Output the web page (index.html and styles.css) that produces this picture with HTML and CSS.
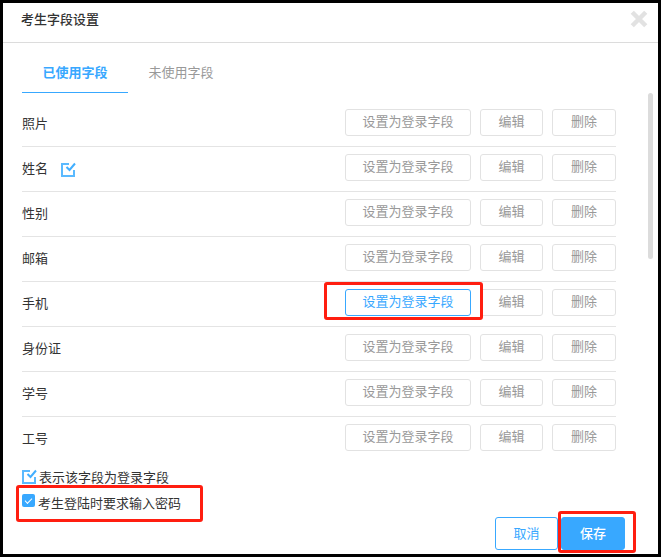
FILE: index.html
```html
<!DOCTYPE html>
<html lang="zh-CN">
<head>
<meta charset="utf-8">
<meta name="viewport" content="width=device-width, initial-scale=1">
<title>考生字段设置</title>
<link rel="stylesheet" href="styles.css">
</head>
<body>
<svg class="sprite" aria-hidden="true">
  <symbol id="login-mark" viewBox="0 0 15 15">
    <path d="M8 2H1v12h12V8" fill="none" stroke="#5bbaff" stroke-width="2"/>
    <path d="M5.500 5l3 3L14 1.500" fill="none" stroke="#42afff" stroke-width="2"/>
  </symbol>
</svg>
<main class="dialog">
  <header class="dialog-header">
    <h1 class="title">考生字段设置</h1>
    <button class="close" type="button" aria-label="关闭">
      <svg class="close-icon" viewBox="0 0 16 16"><path d="M2 2l12 12M14 2L2 14" stroke="#e2e2e2" stroke-width="4"/></svg>
    </button>
  </header>
  <div class="dialog-body">
    <nav class="tabs">
      <button class="tab tab-active" type="button">已使用字段</button>
      <button class="tab" type="button">未使用字段</button>
    </nav>
    <div class="scroll-area">
      <ul class="fields">
        <li class="field">
          <span class="name">照片</span>
          <span class="slot"><button class="btn btn-login" type="button">设置为登录字段</button></span>
          <button class="btn btn-edit" type="button">编辑</button>
          <button class="btn" type="button">删除</button>
        </li>
        <li class="field">
          <span class="name">姓名<svg class="mark"><use href="#login-mark"/></svg></span>
          <span class="slot"><button class="btn btn-login" type="button">设置为登录字段</button></span>
          <button class="btn btn-edit" type="button">编辑</button>
          <button class="btn" type="button">删除</button>
        </li>
        <li class="field">
          <span class="name">性别</span>
          <span class="slot"><button class="btn btn-login" type="button">设置为登录字段</button></span>
          <button class="btn btn-edit" type="button">编辑</button>
          <button class="btn" type="button">删除</button>
        </li>
        <li class="field">
          <span class="name">邮箱</span>
          <span class="slot"><button class="btn btn-login" type="button">设置为登录字段</button></span>
          <button class="btn btn-edit" type="button">编辑</button>
          <button class="btn" type="button">删除</button>
        </li>
        <li class="field">
          <span class="name">手机</span>
          <span class="slot callout callout-login"><button class="btn btn-login btn-hover" type="button">设置为登录字段</button></span>
          <button class="btn btn-edit" type="button">编辑</button>
          <button class="btn" type="button">删除</button>
        </li>
        <li class="field">
          <span class="name">身份证</span>
          <span class="slot"><button class="btn btn-login" type="button">设置为登录字段</button></span>
          <button class="btn btn-edit" type="button">编辑</button>
          <button class="btn" type="button">删除</button>
        </li>
        <li class="field">
          <span class="name">学号</span>
          <span class="slot"><button class="btn btn-login" type="button">设置为登录字段</button></span>
          <button class="btn btn-edit" type="button">编辑</button>
          <button class="btn" type="button">删除</button>
        </li>
        <li class="field">
          <span class="name">工号</span>
          <span class="slot"><button class="btn btn-login" type="button">设置为登录字段</button></span>
          <button class="btn btn-edit" type="button">编辑</button>
          <button class="btn" type="button">删除</button>
        </li>
      </ul>
      <span class="scroll-thumb"></span>
    </div>
    <p class="note"><svg class="mark"><use href="#login-mark"/></svg>表示该字段为登录字段</p>
    <div class="option callout callout-option">
      <input class="check" type="checkbox" id="need-password" checked>
      <label for="need-password">考生登陆时要求输入密码</label>
    </div>
  </div>
  <footer class="actions">
    <button class="action" type="button">取消</button>
    <span class="callout callout-save"><button class="action action-primary" type="button">保存</button></span>
  </footer>
</main>
</body>
</html>
```

FILE: styles.css
```css
*,
*::before,
*::after {
  box-sizing: border-box;
}

body {
  margin: 0;
  color: #333;
  font: 13px/20px "Noto Sans CJK SC", sans-serif;
}

button {
  font: inherit;
  padding: 0;
  cursor: pointer;
}

.sprite {
  position: absolute;
  width: 0;
  height: 0;
}

.dialog {
  display: flex;
  flex-direction: column;
  min-height: 100vh;
  border: 3px solid #000;
  background: #fff;
}

.dialog-header {
  display: flex;
  justify-content: space-between;
  align-items: center;
  height: 40px;
  padding: 0 10px 7px 18px;
  border-bottom: 1px solid #dcdcdc;
}

.title {
  margin: 0;
  font-size: 13px;
  font-weight: 500;
}

.close {
  border: 0;
  background: none;
}

.close-icon {
  display: block;
  width: 18px;
  height: 18px;
}

.dialog-body {
  padding: 9px 0 0 19px;
}

.tabs {
  display: flex;
}

.tab {
  width: 106px;
  height: 41px;
  border: 0;
  border-bottom: 1px solid transparent;
  background: none;
  color: #999;
}

.tab-active {
  border-color: #38a8ff;
  color: #38a8ff;
  font-weight: 700;
}

.scroll-area {
  position: relative;
  padding: 9px 42px 0 0;
}

.scroll-thumb {
  position: absolute;
  top: 0;
  right: 5px;
  width: 5px;
  height: 166px;
  border-radius: 3px;
  background: #dcdcdc;
}

.fields {
  margin: 0;
  padding: 0;
  list-style: none;
}

.field {
  display: flex;
  align-items: center;
  height: 45px;
  padding-bottom: 3px;
  border-bottom: 1px solid #e4e4e4;
}

.field:last-child {
  border-bottom-color: transparent;
}

.name {
  display: flex;
  flex: 1;
  align-items: center;
  gap: 13px;
}

.mark {
  width: 15px;
  height: 15px;
}

.name .mark {
  margin-top: 3px;
}

.note .mark {
  margin-bottom: 2px;
}

.btn {
  display: block;
  width: 64px;
  height: 27px;
  padding-bottom: 4px;
  border: 1px solid #e2e2e2;
  border-radius: 3px;
  background: #fff;
  color: #999;
}

.btn-login {
  width: 126px;
}

.btn-edit {
  width: 63px;
  margin: 0 9px;
}

.btn-hover {
  border-color: #38a8ff;
  color: #38a8ff;
}

.callout {
  position: relative;
}

.callout::after {
  content: "";
  position: absolute;
  border: 3px solid #ff1e10;
  border-radius: 3px;
  pointer-events: none;
}

.callout-login::after {
  inset: -7px -12px -4px -21px;
}

.callout-option::after {
  inset: -8px auto -9px -6px;
  width: 187px;
}

.callout-save::after {
  inset: -6px -11px -3px -3px;
}

.note {
  display: flex;
  align-items: center;
  gap: 2px;
  height: 20px;
  margin: 5px 0 6px;
}

.option {
  display: flex;
  align-items: center;
  gap: 3px;
  height: 20px;
}

.check {
  appearance: none;
  width: 13px;
  height: 13px;
  margin: 0 0 5px;
  border-radius: 2px;
  background: #38a8ff;
}

.check:checked::before {
  content: "";
  display: block;
  width: 7px;
  height: 4px;
  margin: 4px 0 0 3px;
  border: solid #fff;
  border-width: 0 0 1px 1px;
  transform: rotate(-45deg);
}

.actions {
  display: flex;
  justify-content: flex-end;
  gap: 3px;
  margin-top: auto;
  padding: 3px 33px 4px 0;
}

.action {
  display: block;
  width: 63px;
  height: 33px;
  padding-bottom: 2px;
  border: 1px solid #38a8ff;
  border-radius: 3px;
  background: #fff;
  color: #38a8ff;
}

.action-primary {
  width: 64px;
  background: #38a8ff;
  color: #fff;
  font-weight: 500;
}
```
